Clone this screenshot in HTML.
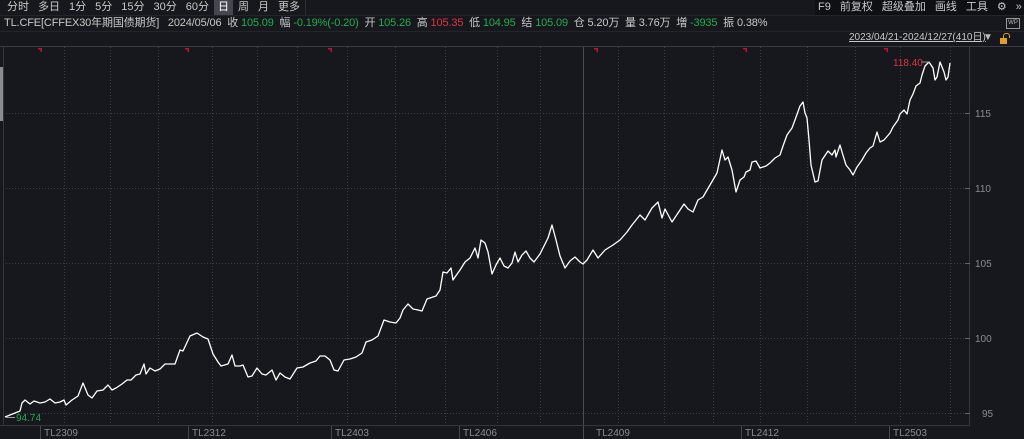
<!DOCTYPE html>
<html><head><meta charset="utf-8"><style>
body{margin:0;width:1024px;height:439px;background:#16181d;overflow:hidden;font-family:"Liberation Sans","Noto Sans CJK SC",sans-serif;color:#c8c8c8;position:relative}
.t{position:absolute;font-size:11px;white-space:nowrap;line-height:14px}
.bar span{display:inline-block;padding:0 4px;margin-right:1px;height:15px;line-height:15px}
.g{color:#1fae4c}.r{color:#e0353a}
</style></head><body>
<div class="t bar" style="left:3px;top:0">
<span>分时</span><span>多日</span><span>1分</span><span>5分</span><span>15分</span><span>30分</span><span>60分</span><span style="background:#44474e;color:#fff">日</span><span>周</span><span>月</span><span>更多</span></div>
<div style="position:absolute;left:0;top:15px;width:1024px;height:1px;background:#23252b"></div>
<div style="position:absolute;left:305px;top:0;width:1px;height:15px;background:#2a2c32"></div>
<div style="position:absolute;left:815px;top:0;width:209px;height:15px;background:#0f1013"></div>
<div class="t bar" style="left:814px;top:0"><span>F9</span><span>前复权</span><span>超级叠加</span><span>画线</span><span>工具</span><span>⚙</span><span>»</span></div>
<div class="t" style="left:4px;top:16px;letter-spacing:-0.15px">TL.CFE[CFFEX30年期国债期货] &nbsp; 2024/05/06 &nbsp;收 <span class="g">105.09</span> &nbsp;幅 <span class="g">-0.19%(-0.20)</span> &nbsp;开 <span class="g">105.26</span> &nbsp;高 <span class="r">105.35</span> &nbsp;低 <span class="g">104.95</span> &nbsp;结 <span class="g">105.09</span> &nbsp;仓 5.20万 &nbsp;量 3.76万 &nbsp;増 <span class="g">-3935</span> &nbsp;振 0.38%</div>
<div style="position:absolute;left:1006px;top:18px;width:12px;height:9px;border:1px solid #999;font-size:6px;color:#bbb;text-align:center;line-height:9px">WP</div>
<div style="position:absolute;left:0;top:31px;width:1024px;height:1px;background:#23252b"></div>
<div class="t" style="left:849px;top:31px;font-size:10px;text-decoration:underline;color:#c8c8c8">2023/04/21-2024/12/27(410日)</div>
<div class="t" style="left:983px;top:31px;font-size:10px;color:#bbb">▼</div>
<div style="position:absolute;left:1000px;top:38px;width:7px;height:6px;background:#e6a11c"></div>
<div style="position:absolute;top:33px;width:5px;height:4px;border:1px solid #e6a11c;border-bottom:none;border-radius:3px 3px 0 0;left:1003px"></div>
<div style="position:absolute;left:0;top:46px;width:1024px;height:1px;background:#3a3c42"></div>
<div style="position:absolute;left:0;top:67px;width:3px;height:54px;background:#8a8c90"></div>
<svg width="1024" height="439" style="position:absolute;left:0;top:0">
<g stroke="#3a3d44" stroke-width="1" stroke-dasharray="1,2">
<line x1="3" y1="113.5" x2="970" y2="113.5"/><line x1="3" y1="188.5" x2="970" y2="188.5"/><line x1="3" y1="263.5" x2="970" y2="263.5"/><line x1="3" y1="338.5" x2="970" y2="338.5"/><line x1="3" y1="413.5" x2="970" y2="413.5"/>
<line x1="64.5" y1="47" x2="64.5" y2="425"/><line x1="110.5" y1="47" x2="110.5" y2="425"/><line x1="158.5" y1="47" x2="158.5" y2="425"/><line x1="212.5" y1="47" x2="212.5" y2="425"/><line x1="257.5" y1="47" x2="257.5" y2="425"/><line x1="297.5" y1="47" x2="297.5" y2="425"/><line x1="347.5" y1="47" x2="347.5" y2="425"/><line x1="395.5" y1="47" x2="395.5" y2="425"/><line x1="445.5" y1="47" x2="445.5" y2="425"/><line x1="497.5" y1="47" x2="497.5" y2="425"/><line x1="540.5" y1="47" x2="540.5" y2="425"/><line x1="618.5" y1="47" x2="618.5" y2="425"/><line x1="664.5" y1="47" x2="664.5" y2="425"/><line x1="713.5" y1="47" x2="713.5" y2="425"/><line x1="760.5" y1="47" x2="760.5" y2="425"/><line x1="807.5" y1="47" x2="807.5" y2="425"/><line x1="855.5" y1="47" x2="855.5" y2="425"/><line x1="900.5" y1="47" x2="900.5" y2="425"/><line x1="950.5" y1="47" x2="950.5" y2="425"/>
</g>
<line x1="3.5" y1="47" x2="3.5" y2="425" stroke="#33363c"/>
<line x1="583.5" y1="47" x2="583.5" y2="439" stroke="#4a4d53"/>
<line x1="969.5" y1="47" x2="969.5" y2="425" stroke="#33363c"/>
<line x1="0" y1="425.5" x2="970" y2="425.5" stroke="#33363c"/>
<g stroke="#666" ><line x1="965" y1="113.5" x2="970" y2="113.5"/><line x1="965" y1="188.5" x2="970" y2="188.5"/><line x1="965" y1="263.5" x2="970" y2="263.5"/><line x1="965" y1="338.5" x2="970" y2="338.5"/><line x1="965" y1="413.5" x2="970" y2="413.5"/></g>
<g fill="#c8102e"><path d="M38 48h4v4h-1.5v-2.5h-2.5z"/><path d="M185 48h4v4h-1.5v-2.5h-2.5z"/><path d="M328 48h4v4h-1.5v-2.5h-2.5z"/><path d="M594 48h4v4h-1.5v-2.5h-2.5z"/><path d="M743 48h4v4h-1.5v-2.5h-2.5z"/><path d="M884 48h4v4h-1.5v-2.5h-2.5z"/></g>
<polyline fill="none" stroke="#fff" stroke-width="1.3" stroke-linejoin="round" points="5,417 15,413 20,411 22,403 25,400 30,404 34,401 40,403 45,402 50,399 55,403 60,402 64,400 66,405 72,400 78,396 83,383 88,395 92,398 97,391 103,390 108,385 112,390 116,388 122,384 127,380 131,380 136,375 140,374 144,364 146,374 150,368 155,371 160,369 165,364 168,364 175,364 180,350 183,351 190,336 197,333 203,337 208,339 213,354 218,362 221,366 228,364 232,355 235,366 240,366 243,365 248,377 252,376 257,368 262,374 266,375 272,370 276,380 280,373 285,377 290,379 297,368 303,367 310,363 316,361 320,356 325,356 330,360 334,370 338,371 344,360 350,359 356,357 362,353 366,342 372,340 378,336 384,320 390,322 396,323 400,318 403,310 408,304 413,309 418,310 422,311 427,299 430,298 436,296 440,290 443,272 447,273 451,268 453,280 455,277 460,270 465,262 470,258 475,248 478,258 481,240 485,243 488,252 492,274 496,265 500,258 504,266 508,268 512,263 515,252 518,262 522,255 526,251 530,258 534,262 540,254 548,238 552,225 556,240 560,256 565,268 570,261 575,257 580,262 583,264 587,260 593,250 598,258 605,250 613,245 620,240 627,232 632,225 640,215 645,220 652,208 658,202 662,218 665,209 672,222 678,213 684,204 688,209 693,212 698,200 703,197 710,185 717,173 722,150 725,160 728,157 732,170 736,192 740,180 744,177 746,172 750,170 752,162 756,161 760,168 763,167 766,166 770,163 775,158 780,155 783,146 787,135 792,128 795,120 800,106 803,102 805,113 807,118 809,140 811,165 815,182 818,181 822,160 828,151 832,155 835,150 836,157 840,145 842,152 846,165 850,170 853,175 857,167 862,160 866,153 870,148 873,146 877,132 880,142 884,140 890,133 893,127 898,120 900,114 904,110 907,114 910,100 913,94 916,86 920,83 922,75 925,66 929,62 933,68 935,80 937,77 940,62 944,72 946,80 948,77 950,63"/>
<line x1="921" y1="62" x2="930" y2="62" stroke="#999"/>
<line x1="6" y1="417.5" x2="15" y2="417.5" stroke="#999"/>
<g font-family="Liberation Sans,sans-serif" font-size="10" fill="#8a8c90">
<text x="975" y="117">115</text><text x="975" y="192">110</text><text x="975" y="267">105</text><text x="975" y="342">100</text><text x="982" y="417">95</text>
<text x="44" y="436">TL2309</text><text x="192" y="436">TL2312</text><text x="335" y="436">TL2403</text><text x="463" y="436">TL2406</text><text x="596" y="436">TL2409</text><text x="745" y="436">TL2412</text><text x="893" y="436">TL2503</text>
</g>
<g stroke="#44474d"><line x1="40.5" y1="426" x2="40.5" y2="439"/><line x1="188.5" y1="426" x2="188.5" y2="439"/><line x1="331.5" y1="426" x2="331.5" y2="439"/><line x1="459.5" y1="426" x2="459.5" y2="439"/><line x1="741.5" y1="426" x2="741.5" y2="439"/><line x1="889.5" y1="426" x2="889.5" y2="439"/></g>
<text x="893" y="66" font-family="Liberation Sans,sans-serif" font-size="10" fill="#e0353a">118.40</text>
<text x="16" y="421" font-family="Liberation Sans,sans-serif" font-size="10" fill="#1fae4c">94.74</text>
</svg>
</body></html>
